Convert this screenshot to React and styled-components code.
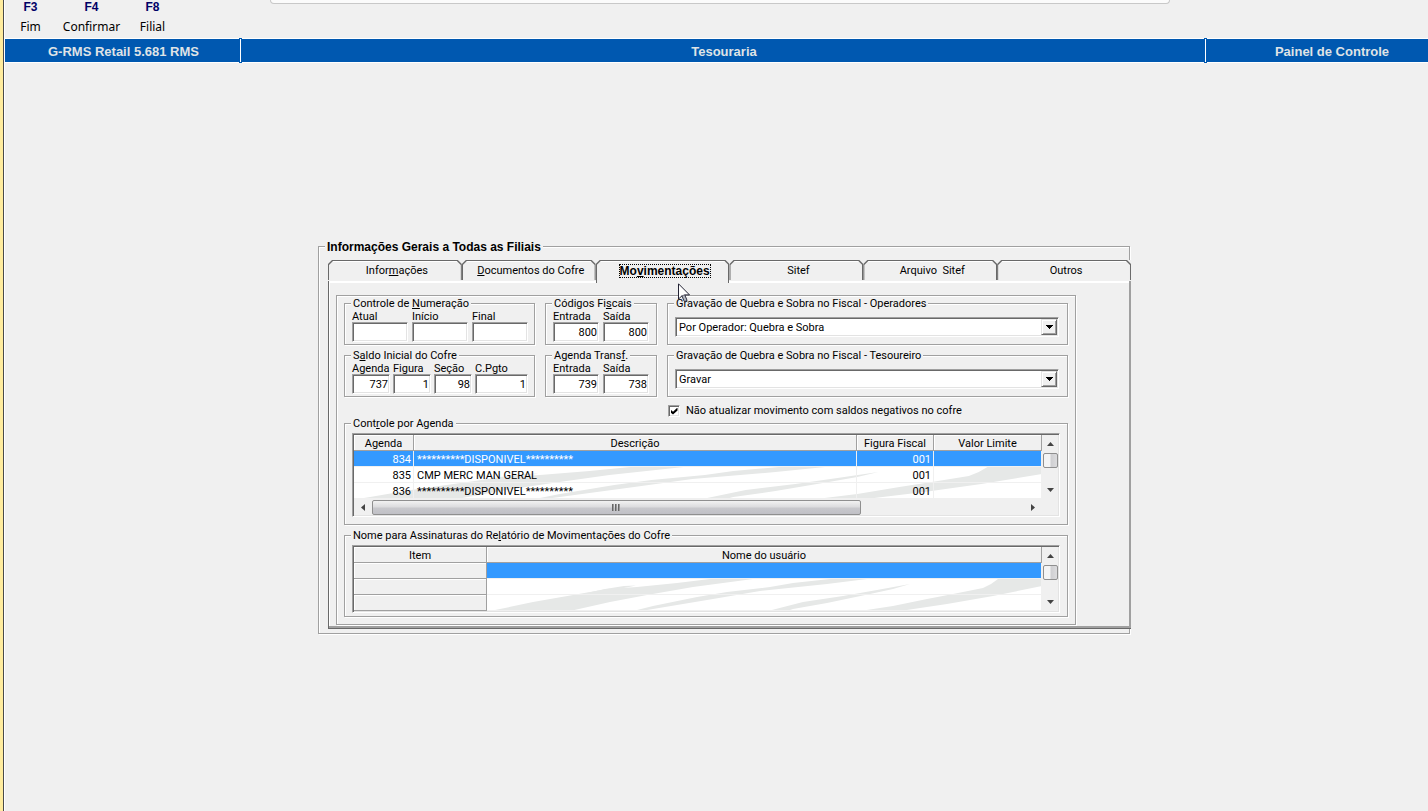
import React, { useState } from 'react';
import styled, { createGlobalStyle, css } from 'styled-components';

const face = '#f0f0f0';
const shadow = '#a0a0a0';
const dark_shadow = '#696969';
const bar_blue = '#0058b0';
const select_blue = '#3399ff';
const bold_family = "'Liberation Sans', Arial, sans-serif";

const tabs = [
  { id: 'info', label: <>Infor<u>m</u>ações</> },
  { id: 'docs', label: <><u>D</u>ocumentos do Cofre</> },
  { id: 'mov', label: <>Mo<u>v</u>imentações</> },
  { id: 'sitef', label: <>Sitef</> },
  { id: 'arquivo', label: <>{'Arquivo  Sitef'}</> },
  { id: 'outros', label: <>Outros</> },
];

const agendas = [
  { code: '834', description: '**********DISPONIVEL**********', figure: '001' },
  { code: '835', description: 'CMP MERC MAN GERAL', figure: '001' },
  { code: '836', description: '**********DISPONIVEL**********', figure: '001' },
];

export default function App() {
  const [active, setActive] = useState('mov');
  return (
    <Window>
      <GlobalStyle />
      <PopupEdge />
      <Toolbar>
        <ToolButton><b>F3</b><span>Fim</span></ToolButton>
        <ToolButton><b>F4</b><span>Confirmar</span></ToolButton>
        <ToolButton><b>F8</b><span>Filial</span></ToolButton>
      </Toolbar>
      <TitleBar>
        <TitleCell>G-RMS Retail 5.681 RMS</TitleCell>
        <TitleCell $divided>Tesouraria</TitleCell>
        <TitleCell $divided $last>Painel de Controle</TitleCell>
      </TitleBar>
      <Main>
        <Dialog>
          <DialogTitle>Informações Gerais a Todas as Filiais</DialogTitle>
          <TabList role="tablist">
            {tabs.map(tab => (
              <Tab
                key={tab.id}
                type="button"
                role="tab"
                aria-selected={tab.id === active}
                $active={tab.id === active}
                onClick={() => setActive(tab.id)}
              >
                <TabLabel $active={tab.id === active}>{tab.label}</TabLabel>
              </Tab>
            ))}
            <Pointer />
          </TabList>
          <TabPanel role="tabpanel">
            <Sheet>
              <GroupGrid>
                <Group>
                  <Legend>Controle de <u>N</u>umeração</Legend>
                  <Fields $columns="56px 56px 56px" $gap={4}>
                    <NumberField label="Atual" />
                    <NumberField label="Início" />
                    <NumberField label="Final" />
                  </Fields>
                </Group>
                <Group>
                  <Legend>Códigos Fi<u>s</u>cais</Legend>
                  <Fields $columns="46px 46px" $gap={4}>
                    <NumberField label="Entrada" value="800" />
                    <NumberField label="Saída" value="800" />
                  </Fields>
                </Group>
                <Group>
                  <Legend>Gravação de Quebra e Sobra no Fiscal - Operadores</Legend>
                  <Combo label="Gravação Operadores" value="Por Operador: Quebra e Sobra" />
                </Group>
                <Group>
                  <Legend>S<u>a</u>ldo Inicial do Cofre</Legend>
                  <Fields $columns="38px 38px 38px 53px" $gap={3}>
                    <NumberField label="Agenda" value="737" />
                    <NumberField label="Figura" value="1" />
                    <NumberField label="Seção" value="98" />
                    <NumberField label="C.Pgto" value="1" />
                  </Fields>
                </Group>
                <Group>
                  <Legend>Agenda Trans<u>f</u>.</Legend>
                  <Fields $columns="46px 46px" $gap={4}>
                    <NumberField label="Entrada" value="739" />
                    <NumberField label="Saída" value="738" />
                  </Fields>
                </Group>
                <Group>
                  <Legend>Gravação de Quebra e Sobra no Fiscal - Tesoureiro</Legend>
                  <Combo label="Gravação Tesoureiro" value="Gravar" />
                </Group>
                <CheckRow>
                  <CheckBox type="checkbox" defaultChecked />
                  Não atualizar movimento com saldos negativos no cofre
                </CheckRow>
              </GroupGrid>

              <GridGroup $bottom={7}>
                <Legend>Cont<u>r</u>ole por Agenda</Legend>
                <GridFrame>
                  <TableArea>
                    <Swoosh $left={0} />
                    <DataTable>
                      <colgroup>
                        <col width="60" />
                        <col />
                        <col width="77" />
                        <col width="108" />
                      </colgroup>
                      <thead>
                        <tr>
                          <HeadCell>Agenda</HeadCell>
                          <HeadCell>Descrição</HeadCell>
                          <HeadCell>Figura Fiscal</HeadCell>
                          <HeadCell>Valor Limite</HeadCell>
                        </tr>
                      </thead>
                      <tbody>
                        {agendas.map((row, i) => (
                          <Row key={row.code} $selected={i === 0}>
                            <Cell $right>{row.code}</Cell>
                            <Cell>{row.description}</Cell>
                            <Cell $right>{row.figure}</Cell>
                            <Cell />
                          </Row>
                        ))}
                      </tbody>
                    </DataTable>
                  </TableArea>
                  <VerticalScroll />
                  <HorizontalScroll />
                </GridFrame>
              </GridGroup>

              <GridGroup $bottom={3}>
                <Legend>Nome para Assinaturas do Re<u>l</u>atório de Movimentações do Cofre</Legend>
                <GridFrame>
                  <TableArea>
                    <Swoosh $left={133} />
                    <DataTable>
                      <colgroup>
                        <col width="133" />
                        <col />
                      </colgroup>
                      <thead>
                        <tr>
                          <HeadCell>Item</HeadCell>
                          <HeadCell>Nome do usuário</HeadCell>
                        </tr>
                      </thead>
                      <tbody>
                        {[0, 1, 2].map(i => (
                          <Row key={i} $selected={i === 0}>
                            <HeadCell as="td" />
                            <Cell />
                          </Row>
                        ))}
                      </tbody>
                    </DataTable>
                  </TableArea>
                  <VerticalScroll />
                </GridFrame>
              </GridGroup>
            </Sheet>
          </TabPanel>
        </Dialog>
      </Main>
    </Window>
  );
}

function NumberField({ label, value = '' }) {
  return (
    <Field>
      <span>{label}</span>
      <NumberInput type="text" defaultValue={value} />
    </Field>
  );
}

function Combo({ label, value }) {
  return (
    <ComboBox>
      <ComboSelect aria-label={label} defaultValue={value}>
        <option>{value}</option>
      </ComboSelect>
      <ComboArrow>
        <svg width="7" height="4" viewBox="0 0 7 4" shapeRendering="crispEdges">
          <path d="M0 0h7v1h-1v1h-1v1h-1v1h-1v-1h-1v-1h-1v-1h-1z" fill="#000" />
        </svg>
      </ComboArrow>
    </ComboBox>
  );
}

function Arrow({ d, w = 7, h = 4 }) {
  return (
    <svg width={w} height={h} viewBox={`0 0 ${w} ${h}`}>
      <path d={d} fill="#444" />
    </svg>
  );
}

function VerticalScroll() {
  return (
    <VScroll>
      <ScrollButton type="button" aria-label="Subir"><Arrow d="M0 4L3.5 0L7 4z" /></ScrollButton>
      <VThumb />
      <ScrollButton type="button" aria-label="Descer"><Arrow d="M0 0L3.5 4L7 0z" /></ScrollButton>
    </VScroll>
  );
}

function HorizontalScroll() {
  return (
    <HScroll>
      <ScrollButton type="button" aria-label="Esquerda"><Arrow d="M4 0L0 3.5L4 7z" w={4} h={7} /></ScrollButton>
      <HTrack>
        <HThumb>
          <svg width="9" height="7" viewBox="0 0 9 7" shapeRendering="crispEdges">
            <path d="M0 0h2v7h-2zM3 0h2v7h-2zM6 0h2v7h-2z" fill="#999" />
            <path d="M0 0h1v7h-1zM3 0h1v7h-1zM6 0h1v7h-1z" fill="#666" />
          </svg>
        </HThumb>
      </HTrack>
      <ScrollButton type="button" aria-label="Direita"><Arrow d="M0 0L4 3.5L0 7z" w={4} h={7} /></ScrollButton>
    </HScroll>
  );
}

// light grey brush strokes behind the grid rows
function Swoosh({ $left }) {
  return (
    <SwooshBox $left={$left}>
      <svg width="100%" height="32" viewBox="0 0 555 32" preserveAspectRatio="none">
        <g fill="#e6e8e7">
          <path d="M3 32L13 30L46 23L86 16L120 10L150 8L190 4L223 0H266L206 8L160 16L123 23L83 32z" />
          <path d="M100 14L118 10L137 7L149 6.500L137 9L118 13z" />
          <path d="M146 32L166 27L210 18L240 13L283 8L306 4L343 0H380L340 5L273 12L226 20L160 31z" />
          <path d="M281 32L316 23L356 17L390 11L423 5L406 10L383 15L340 24L306 30L300 32z" />
          <path d="M373 32L406 27L440 20L466 15L496 9L504 5L511 0H555V7L506 17L460 25L413 32z" />
        </g>
      </svg>
    </SwooshBox>
  );
}

function Pointer() {
  return (
    <PointerBox>
      <svg width="13" height="20" viewBox="0 0 13 20">
        <path
          d="M0.500 0.800V16L4 12.800L6.500 18.500L9 17.400L6.600 11.900H11.500z"
          fill="#fff"
          stroke="#223"
          strokeWidth="1"
        />
        <path d="M4 12.800L6.500 18.500L9 17.400L6.600 11.900z" fill="#b8bcc6" stroke="#223" strokeWidth="0.600" />
      </svg>
    </PointerBox>
  );
}

const GlobalStyle = createGlobalStyle`
  body {
    margin: 0;
    background: ${face};
    color: #000;
    font-family: Roboto, 'Liberation Sans', sans-serif;
    font-size: 11px;
    line-height: 14px;
    overflow: hidden;
  }
  * {
    box-sizing: border-box;
  }
  button, input, select {
    font: inherit;
    color: inherit;
    border-radius: 0;
    margin: 0;
  }
  u {
    text-underline-offset: 1px;
  }
`;

const etched = css`
  border: 1px solid ${shadow};
  box-shadow: 1px 1px 0 #fff, inset 1px 1px 0 #fff;
`;
const sunken = css`
  border: 1px solid;
  border-color: ${shadow} #fff #fff ${shadow};
  box-shadow: inset 1px 1px 0 ${dark_shadow}, inset -1px -1px 0 #e3e3e3;
`;

const Window = styled.div`
  position: relative;
  min-height: 100vh;
  border-left: 3px solid #ffec9e;
  padding-left: 2px;
  background: linear-gradient(to right, #4a4a4a 1px, #fff 1px, #fff 2px, ${face} 2px);
`;
const PopupEdge = styled.div`
  position: absolute;
  top: 0;
  left: 267px;
  right: 258px;
  height: 4px;
  border: 1px solid #c8c8c8;
  border-top: 0;
  border-radius: 0 0 5px 5px;
  background: #fbfbfb;
`;
const Toolbar = styled.div`
  display: flex;
  gap: 10px;
  height: 38px;
`;
const ToolButton = styled.button`
  display: flex;
  flex-direction: column;
  align-items: center;
  gap: 6px;
  width: 51px;
  padding: 0;
  border: 0;
  background: none;
  white-space: nowrap;
  b {
    color: #000066;
    font-family: ${bold_family};
    font-size: 12px;
  }
  span {
    font-family: 'Noto Sans', 'Open Sans', sans-serif;
    font-size: 12px;
  }
`;
const TitleBar = styled.header`
  display: grid;
  grid-template-columns: 235px 1fr 223px;
  border-top: 1px solid #fff;
  border-bottom: 1px solid #fff;
  background: ${bar_blue};
`;
const TitleCell = styled.div`
  position: relative;
  height: 23px;
  padding-left: ${props => (props.$last ? 30 : 2)}px;
  border-left: ${props => (props.$divided ? '1px solid #fff' : '0')};
  color: #dfe3e6;
  font-family: ${bold_family};
  font-size: 13px;
  font-weight: bold;
  line-height: 25px;
  text-align: center;
  &::before,
  &::after {
    content: '';
    display: ${props => (props.$divided ? 'block' : 'none')};
    position: absolute;
    left: -2px;
    width: 3px;
    height: 1px;
    background: ${bar_blue};
  }
  &::before {
    top: -1px;
  }
  &::after {
    bottom: -1px;
  }
`;
const Main = styled.main`
  display: flex;
  justify-content: center;
  padding: 177px 0 20px 15px;
`;
const Dialog = styled.fieldset`
  ${etched}
  width: 812px;
  min-width: 0;
  margin: 0;
  padding: 8px 0 4px 9px;
`;
const DialogTitle = styled.legend`
  height: 12px;
  margin-left: -3px;
  padding: 0 2px;
  background: ${face};
  font-family: ${bold_family};
  font-size: 12px;
  font-weight: bold;
`;
const TabList = styled.div`
  position: relative;
  display: grid;
  grid-template-columns: repeat(6, 1fr);
  height: 21px;
  margin-right: -2px;
  background: ${face};
`;
const Tab = styled.button`
  position: relative;
  z-index: ${props => (props.$active ? 1 : 0)};
  height: ${props => (props.$active ? 23 : 20)}px;
  padding: 4px 0 0 4px;
  display: flex;
  justify-content: center;
  align-items: flex-start;
  border: 0;
  background: none;
  white-space: pre;
  ${props =>
    props.$active &&
    css`
      font-family: ${bold_family};
      font-size: 12px;
      font-weight: bold;
    `}
  &::before,
  &::after {
    content: '';
    position: absolute;
    z-index: -1;
    inset: 0;
    background: ${dark_shadow};
    clip-path: polygon(0 100%, 0 4px, 4px 0, calc(100% - 4px) 0, 100% 4px, 100% 100%);
  }
  &::after {
    inset: 1px 1px 0 1px;
    background: linear-gradient(#fff 1px, ${face} 1px);
  }
`;
const TabLabel = styled.span`
  padding: 0 1px;
  outline: ${props => (props.$active ? '1px dotted #000' : 'none')};
  outline-offset: -1px;
`;
const PointerBox = styled.div`
  position: absolute;
  z-index: 2;
  left: 350px;
  top: 23px;
  pointer-events: none;
`;
const TabPanel = styled.div`
  margin-right: -2px;
  padding: 14px 55px 3px 7px;
  border: 1px solid ${dark_shadow};
  border-width: 1px 0 1px 1px;
  margin-top: -1px;
  background: ${face};
  box-shadow: inset -2px -2px 0 ${shadow}, inset 1px 2px 0 #fff;
`;
const Sheet = styled.div`
  ${etched}
  padding: 1px 7px 7px;
`;
const GroupGrid = styled.div`
  display: grid;
  grid-template-columns: 191px 112px 1fr;
  gap: 4px 10px;
`;
const Group = styled.fieldset`
  ${etched}
  min-width: 0;
  margin: 0;
  padding: 1px 8px 2px 7px;
`;
const GridGroup = styled(Group)`
  padding: 4px 7px ${props => props.$bottom}px;
  & + & {
    margin-top: 4px;
  }
`;
const Legend = styled.legend`
  height: 12px;
  margin-left: -1px;
  padding: 0 2px;
  background: ${face};
`;
const Fields = styled.div`
  display: grid;
  grid-template-columns: ${props => props.$columns};
  gap: ${props => props.$gap}px;
`;
const Field = styled.label`
  display: flex;
  flex-direction: column;
  white-space: nowrap;
  span {
    height: 12px;
  }
`;
const NumberInput = styled.input`
  ${sunken}
  width: 100%;
  height: 20px;
  padding: 0 1px;
  background: #fff;
  text-align: right;
`;
const ComboBox = styled.div`
  position: relative;
  margin-top: 7px;
`;
const ComboSelect = styled.select`
  ${sunken}
  display: block;
  appearance: none;
  width: 100%;
  height: 20px;
  padding: 2px 20px 0 3px;
  background: #fff;
`;
const ComboArrow = styled.span`
  position: absolute;
  top: 2px;
  right: 2px;
  bottom: 2px;
  width: 16px;
  display: flex;
  align-items: center;
  justify-content: center;
  border: 1px solid;
  border-color: #e3e3e3 ${dark_shadow} ${dark_shadow} #e3e3e3;
  box-shadow: inset 1px 1px 0 #fff, inset -1px -1px 0 ${shadow};
  background: ${face};
  pointer-events: none;
`;
const CheckRow = styled.label`
  grid-column: 3;
  display: flex;
  align-items: center;
  gap: 6px;
  height: 16px;
  padding: 4px 0 0 1px;
`;
const CheckBox = styled.input`
  ${sunken}
  appearance: none;
  display: grid;
  place-items: center;
  width: 12px;
  height: 12px;
  background: #fff;
  &:checked::after {
    content: '';
    width: 7px;
    height: 7px;
    background: #000;
    clip-path: polygon(0 30%, 36% 62%, 100% 0, 100% 42%, 36% 100%, 0 70%);
  }
`;
const GridFrame = styled.div`
  ${sunken}
  display: grid;
  grid-template-columns: 1fr 16px;
  padding: 1px;
`;
const TableArea = styled.div`
  position: relative;
  background: #fff;
`;
const SwooshBox = styled.div`
  position: absolute;
  left: ${props => props.$left}px;
  right: 0;
  bottom: 0;
  height: 32px;
`;
const DataTable = styled.table`
  position: relative;
  width: 100%;
  table-layout: fixed;
  border-collapse: separate;
  border-spacing: 0;
`;
const HeadCell = styled.th`
  height: 16px;
  padding: 2px 0 0;
  border: 1px solid ${shadow};
  border-width: 0 1px 1px 0;
  background: ${face};
  box-shadow: inset 1px 1px 0 #fff;
  font-weight: normal;
  line-height: 13px;
`;
const Row = styled.tr`
  color: ${props => (props.$selected ? '#fff' : '#000')};
  background: ${props => (props.$selected ? select_blue : 'transparent')};
`;
const Cell = styled.td`
  height: 16px;
  padding: 2px 2px 0 3px;
  border: 1px solid ${face};
  border-width: 0 1px 1px 0;
  line-height: 13px;
  text-align: ${props => (props.$right ? 'right' : 'left')};
  white-space: nowrap;
`;
const VScroll = styled.div`
  display: flex;
  flex-direction: column;
  height: 64px;
  padding-left: 1px;
  background: ${face};
  & > :last-child {
    margin-top: auto;
  }
`;
const ScrollButton = styled.button`
  display: flex;
  align-items: center;
  justify-content: center;
  flex: 0 0 18px;
  padding: 0;
  border: 0;
  background: none;
`;
const VThumb = styled.div`
  height: 15px;
  border: 1px solid #8f8f8f;
  border-radius: 2px;
  background: linear-gradient(to right, #f4f4f4 45%, #cfcfd2 55%, #dcdcde);
`;
const HScroll = styled.div`
  display: flex;
  height: 16px;
`;
const HTrack = styled.div`
  flex: 1;
`;
const HThumb = styled.div`
  display: flex;
  align-items: center;
  justify-content: center;
  width: 75%;
  height: 15px;
  margin-top: 1px;
  border: 1px solid #8f8f8f;
  border-radius: 2px;
  background: linear-gradient(#f2f2f2, #dcdcde 45%, #c8c8cc 55%, #c0c0c6);
`;
